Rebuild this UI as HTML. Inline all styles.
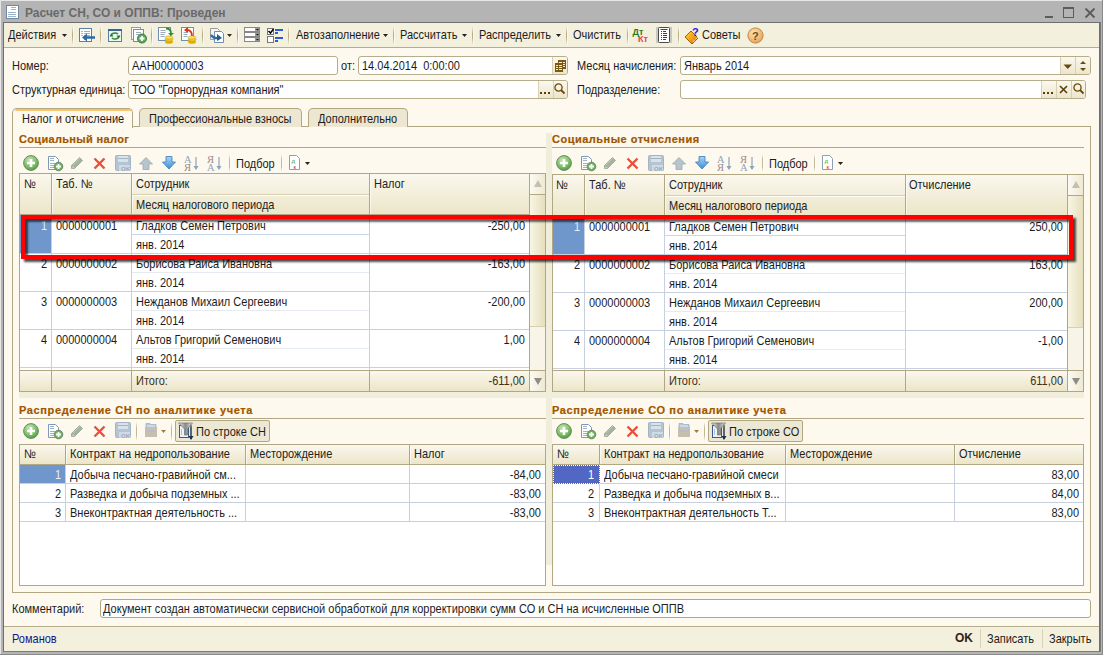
<!DOCTYPE html>
<html><head><meta charset="utf-8">
<style>
*{box-sizing:border-box;margin:0;padding:0}
html,body{width:1103px;height:655px;overflow:hidden;background:#b4b4b4}
body{font-family:"Liberation Sans",sans-serif;font-size:11px;color:#000;position:relative}
.a{position:absolute;white-space:nowrap}
.t{position:absolute;white-space:nowrap;line-height:13px}
.inp{position:absolute;background:#fff;border:1px solid #b6ad8b;border-radius:3px}
.btn{position:absolute;top:0;height:17px;border-left:1px solid #d8d0b0;background:linear-gradient(#fbf8ee,#ece6cc)}
.sep{position:absolute;width:1px;background:#d9d2b4}
.tbs{top:26px;height:19px;background:linear-gradient(#f4f0de,#b9ad86 40%,#b9ad86 60%,#f4f0de);box-shadow:1px 0 0 rgba(255,255,250,.5)}
.t{color:#1c1c1c;transform:scaleY(1.12);transform-origin:0 2px}
.hdr{position:absolute;color:#a05600;-webkit-text-stroke:0.2px #a05600;font-weight:bold;font-size:11px;white-space:nowrap;line-height:13px}
.hl{position:absolute;height:1px;background:#b6ad8b}
.vl{position:absolute;width:1px;background:#b6ad8b}
.gl{position:absolute;height:1px;background:#c9d3e0}
.gv{position:absolute;width:1px;background:#c9d3e0}
</style></head><body>
<!-- window frame -->
<div class="a" style="left:0;top:0;width:1103px;height:1px;background:#e6e6e6"></div>
<div class="a" style="left:0;top:0;width:1px;height:655px;background:#e6e6e6"></div>
<div class="a" style="left:1102px;top:0;width:1px;height:655px;background:#8a8a8a"></div>
<div class="a" style="left:0;top:654px;width:1103px;height:1px;background:#8a8a8a"></div>
<!-- inner dark border -->
<div class="a" style="left:3px;top:22px;width:1097px;height:629px;border:1px solid #6e6e6e;background:#fdf9ee"></div>
<div class="a" style="left:1100px;top:22px;width:1px;height:630px;background:#7a7a7a"></div>
<div class="a" style="left:3px;top:651px;width:1098px;height:1px;background:#7a7a7a"></div>
<!-- title -->
<div class="a" style="left:6px;top:5px;width:13px;height:14px;background:#fff;border:1px solid #6d89a6"></div>
<div class="a" style="left:11px;top:7px;width:5px;height:1px;background:#9fb4c8"></div>
<div class="a" style="left:11px;top:9px;width:5px;height:1px;background:#9fb4c8"></div>
<div class="a" style="left:8px;top:12px;width:8px;height:1px;background:#9fb4c8"></div>
<div class="a" style="left:8px;top:14px;width:8px;height:1px;background:#9fb4c8"></div>
<div class="a" style="left:8px;top:16px;width:8px;height:1px;background:#9fb4c8"></div>
<div class="t" style="transform:none;left:25px;top:7px;font-weight:bold;color:#6a6a6a;font-size:12px">Расчет СН, СО и ОППВ: Проведен</div>
<div class="a" style="left:1045px;top:16px;width:8px;height:2px;background:#5c5c5c"></div>
<div class="a" style="left:1063px;top:7px;width:11px;height:11px;border:1px solid #5c5c5c;border-top-width:2px"></div>
<svg class="a" style="left:1084px;top:7px" width="12" height="12"><path d="M1.5 1.5L10.5 10.5M10.5 1.5L1.5 10.5" stroke="#5c5c5c" stroke-width="1.8"/></svg>

<!-- toolbar -->
<div class="a" style="left:4px;top:23px;width:1095px;height:24px;background:#f4f0de"></div>
<div class="a" style="left:4px;top:47px;width:1095px;height:1px;background:#b6ad8b"></div>
<div class="t" style="left:8px;top:28px">Действия</div>
<svg class="a" style="left:62px;top:34px" width="6" height="4"><path d="M0 0H5L2.5 3Z" fill="#222"/></svg>
<div class="sep tbs" style="left:72px"></div>
<!-- icon1 list+arrow -->
<svg class="a" style="left:78px;top:27px" width="18" height="16">
<rect x="1.5" y="1.5" width="12" height="13" fill="#fff" stroke="#5a7fa8"/>
<path d="M6 4.5h6M6 6.5h6M6 8.5h6M6 10.5h3M6 12.5h3" stroke="#9ab0c8"/><path d="M3.5 4.5h1M3.5 6.5h1M3.5 8.5h1" stroke="#3a70b0"/>
<path d="M17 10.5H8.5" stroke="#2d6aa8" stroke-width="2.5"/><path d="M4 10.5L9 6.5V14.5Z" fill="#2d6aa8"/>
</svg>
<div class="sep tbs" style="left:100px"></div>
<!-- icon2 window refresh -->
<svg class="a" style="left:107px;top:28px" width="16" height="15">
<rect x="1.5" y="1.5" width="13" height="12" fill="#eef3f8" stroke="#5a7fa8"/>
<rect x="1" y="1" width="14" height="2" fill="#3a6494"/>
<path d="M4 8a4 3 0 0 1 7-2" stroke="#2e8b2e" stroke-width="1.6" fill="none"/><path d="M2.5 8.5h4L4.5 6z" fill="#1e7a1e"/>
<path d="M12 8a4 3 0 0 1 -7 2" stroke="#2e8b2e" stroke-width="1.6" fill="none"/><path d="M13.5 7.5h-4L11.5 10z" fill="#1e7a1e"/>
</svg>
<!-- icon3 copy plus -->
<svg class="a" style="left:130px;top:26px" width="18" height="18">
<rect x="1.5" y="1.5" width="9" height="12" fill="#fff" stroke="#8aa0b8"/>
<rect x="3.5" y="3.5" width="10" height="12" fill="#fff" stroke="#6f8fb0"/>
<path d="M6 6.5h5M6 8.5h3" stroke="#9ab"/>
<circle cx="12" cy="12.5" r="4.5" fill="#5aa85a" stroke="#3d7d3d"/>
<path d="M12 10v5M9.5 12.5h5" stroke="#fff" stroke-width="1.8"/>
</svg>
<div class="sep tbs" style="left:151px"></div>
<!-- icon4 doc green arrow coins -->
<svg class="a" style="left:157px;top:26px" width="18" height="18">
<rect x="1.5" y="1.5" width="12" height="13" fill="#fff" stroke="#6f8fb0"/>
<path d="M3.5 4.5h5M3.5 6.5h5M3.5 8.5h4M3.5 10.5h4" stroke="#9ab"/>
<path d="M9 2.5q5 0 5 5" stroke="#2f8f2f" stroke-width="1.8" fill="none"/><path d="M11 7h6l-3 3z" fill="#2f8f2f"/>
<ellipse cx="12" cy="16" rx="4" ry="1.8" fill="#e0b000"/><ellipse cx="12" cy="13.5" rx="4" ry="1.8" fill="#f2cc30" stroke="#c79a00" stroke-width=".6"/><ellipse cx="12" cy="11.5" rx="4" ry="1.6" fill="#ffe070" stroke="#c79a00" stroke-width=".6"/>
</svg>
<!-- icon5 doc red arrow coins -->
<svg class="a" style="left:180px;top:26px" width="18" height="18">
<rect x="1.5" y="1.5" width="12" height="13" fill="#fff" stroke="#6f8fb0"/>
<path d="M3.5 6.5h4M3.5 8.5h4M3.5 10.5h4" stroke="#9ab"/>
<path d="M12 10q0-6-5-6" stroke="#e03010" stroke-width="1.8" fill="none"/><path d="M4 4l4-3v6z" fill="#e03010"/>
<ellipse cx="12" cy="16" rx="4" ry="1.8" fill="#e0b000"/><ellipse cx="12" cy="13.5" rx="4" ry="1.8" fill="#f2cc30" stroke="#c79a00" stroke-width=".6"/><ellipse cx="12" cy="11.5" rx="4" ry="1.6" fill="#ffe070" stroke="#c79a00" stroke-width=".6"/>
</svg>
<div class="sep tbs" style="left:202px"></div>
<!-- icon6 two docs blue arrow -->
<svg class="a" style="left:209px;top:27px" width="16" height="16">
<path d="M1.5 1.5h7l2 2v9h-9z" fill="#f4f4f4" stroke="#9a9a9a"/>
<path d="M5.5 4.5h7l2 2v9h-9z" fill="#fff" stroke="#6f8fb0"/>
<path d="M2 8q3 4 7 3" stroke="#2d6aa8" stroke-width="2.2" fill="none"/><path d="M8 7l5 4-5 3z" fill="#1f5a90"/>
</svg>
<svg class="a" style="left:227px;top:34px" width="6" height="4"><path d="M0 0H5L2.5 3Z" fill="#3a2a10"/></svg>
<div class="sep tbs" style="left:237px"></div>
<!-- icon7 three fields -->
<svg class="a" style="left:244px;top:27px" width="17" height="16">
<g fill="#fff" stroke="#888"><rect x=".5" y=".5" width="15" height="4"/><rect x=".5" y="5.5" width="15" height="4"/><rect x=".5" y="10.5" width="15" height="4"/></g>
<g fill="#999"><rect x="11" y="1" width="4" height="3"/><rect x="11" y="6" width="4" height="3"/><rect x="11" y="11" width="4" height="3"/></g>
<g fill="#111"><path d="M12 2h3l-1.5 1.5z"/><path d="M12 7h3l-1.5 1.5z"/><path d="M12 12h3l-1.5 1.5z"/></g>
</svg>
<!-- icon8 checklist -->
<svg class="a" style="left:266px;top:27px" width="18" height="16">
<rect x="1.5" y="1.5" width="6" height="6" fill="#fff" stroke="#777"/>
<path d="M2.5 4l2 2 3-4" stroke="#000" stroke-width="1.5" fill="none"/>
<rect x="1.5" y="9.5" width="6" height="6" fill="#fff" stroke="#777"/>
<rect x="9" y="2" width="8" height="2" fill="#2a5ad8"/><rect x="9" y="5" width="3" height="2" fill="#2a5ad8"/>
<rect x="9" y="10" width="8" height="2" fill="#2a5ad8"/><rect x="9" y="13" width="3" height="2" fill="#2a5ad8"/>
</svg>
<div class="sep tbs" style="left:288px"></div>
<div class="t" style="left:296px;top:28px">Автозаполнение</div>
<svg class="a" style="left:383px;top:34px" width="6" height="4"><path d="M0 0H5L2.5 3Z" fill="#222"/></svg>
<div class="sep tbs" style="left:393px"></div>
<div class="t" style="left:400px;top:28px">Рассчитать</div>
<svg class="a" style="left:462px;top:34px" width="6" height="4"><path d="M0 0H5L2.5 3Z" fill="#222"/></svg>
<div class="sep tbs" style="left:472px"></div>
<div class="t" style="left:479px;top:28px">Распределить</div>
<svg class="a" style="left:556px;top:34px" width="6" height="4"><path d="M0 0H5L2.5 3Z" fill="#222"/></svg>
<div class="sep tbs" style="left:566px"></div>
<div class="t" style="left:573px;top:28px">Очистить</div>
<div class="sep tbs" style="left:627px"></div>
<!-- Dt Kt -->
<svg class="a" style="left:632px;top:26px" width="18" height="18">
<text x="0.5" y="8.5" font-family="Liberation Sans" font-weight="bold" font-size="9" fill="#1e7a1e">Дт</text>
<text x="6" y="16" font-family="Liberation Sans" font-weight="bold" font-size="9" fill="#f04040">Кт</text>
</svg>
<!-- list doc -->
<svg class="a" style="left:656px;top:27px" width="16" height="16">
<rect x="0" y="0" width="16" height="16" fill="#c9c9c2"/>
<rect x="2.5" y=".5" width="11" height="15" rx="1" fill="#fff" stroke="#4a4a4a"/>
<path d="M4.5 2.5h7" stroke="#1a4a7a" stroke-width="1"/>
<g fill="#1a4a7a"><rect x="5" y="4" width="1" height="1"/><rect x="5" y="6" width="1" height="1"/><rect x="5" y="8" width="1" height="1"/><rect x="5" y="10" width="1" height="1"/><rect x="5" y="12" width="1" height="1"/>
<rect x="7" y="4" width="3" height="1"/><rect x="7" y="6" width="4" height="1"/><rect x="7" y="8" width="4" height="1"/><rect x="7" y="10" width="4" height="1"/><rect x="7" y="12" width="3" height="1"/></g>
</svg>
<div class="sep tbs" style="left:678px"></div>
<!-- sovety -->
<svg class="a" style="left:684px;top:26px" width="18" height="18">
<defs><linearGradient id="bk" x1="0" y1="0" x2="1" y2="1"><stop offset="0" stop-color="#ffe020"/><stop offset="1" stop-color="#e86a10"/></linearGradient></defs>
<path d="M1 11l6-6 7 7-6 6z" fill="url(#bk)" stroke="#8a4000" stroke-width=".8"/>
<path d="M9 16l5-5" stroke="#fff" stroke-width="1" stroke-dasharray="1 1"/>
<text x="8" y="10" font-family="Liberation Sans" font-weight="bold" font-size="11" fill="#1a1ae0">?</text>
</svg>
<div class="t" style="left:702px;top:28px">Советы</div>
<svg class="a" style="left:747px;top:27px" width="17" height="17">
<defs><radialGradient id="hg" cx=".4" cy=".35" r=".7"><stop offset="0" stop-color="#ffe6b8"/><stop offset="1" stop-color="#e8a04a"/></radialGradient></defs>
<circle cx="8.5" cy="8.5" r="7.6" fill="url(#hg)" stroke="#b98a50"/>
<text x="5" y="13" font-family="Liberation Sans" font-weight="bold" font-size="11" fill="#6a4a20">?</text>
</svg>


<!-- form body -->
<!-- header fields -->
<div class="t" style="left:12px;top:59px">Номер:</div>
<div class="inp" style="left:128px;top:56px;width:210px;height:19px"></div>
<div class="t" style="left:132px;top:59px">ААН00000003</div>
<div class="t" style="left:341px;top:59px">от:</div>
<div class="inp" style="left:358px;top:56px;width:210px;height:19px;overflow:hidden"><div class="btn" style="left:193px;width:16px"></div></div>
<div class="t" style="left:362px;top:59px">14.04.2014&nbsp; 0:00:00</div>
<svg class="a" style="left:555px;top:60px" width="11" height="12"><g fill="#7a5a10"><rect x="3" y="0" width="8" height="9"/><rect x="0" y="3" width="8" height="9"/></g><g fill="#f4efdc"><rect x="1" y="5" width="2" height="1"/><rect x="4" y="5" width="3" height="1"/><rect x="1" y="7" width="2" height="1"/><rect x="4" y="7" width="3" height="1"/><rect x="1" y="9" width="2" height="1"/><rect x="4" y="9" width="3" height="1"/><rect x="1" y="10" width="6" height="1" fill="#7a5a10"/><rect x="8" y="2" width="2" height="1"/><rect x="8" y="4" width="2" height="1"/><rect x="8" y="6" width="2" height="1"/><rect x="4" y="2" width="3" height="1"/></g></svg>
<div class="t" style="left:577px;top:59px">Месяц начисления:</div>
<div class="inp" style="left:680px;top:56px;width:411px;height:19px;overflow:hidden"><div class="btn" style="left:379px;width:15px"></div><div class="btn" style="left:394px;width:16px"></div></div>
<div class="t" style="left:684px;top:59px">Январь 2014</div>
<svg class="a" style="left:1063px;top:64px" width="10" height="6"><path d="M0.5 0.5H9L4.75 5Z" fill="#6a4a08"/></svg>
<svg class="a" style="left:1079px;top:59.5px" width="9" height="12"><path d="M1 4H7L4 1Z M1 8H7L4 11Z" fill="#6a4a08"/></svg>

<div class="t" style="left:12px;top:83px">Структурная единица:</div>
<div class="inp" style="left:128px;top:80px;width:440px;height:19px;overflow:hidden"><div class="btn" style="left:409px;width:15px"></div><div class="btn" style="left:424px;width:15px"></div></div>
<div class="t" style="left:132px;top:83px">ТОО "Горнорудная компания"</div>
<svg class="a" style="left:540px;top:92px" width="11" height="3"><g fill="#5a4008"><rect x="0" y="0" width="2" height="2"/><rect x="4" y="0" width="2" height="2"/><rect x="8" y="0" width="2" height="2"/></g></svg>
<svg class="a" style="left:554px;top:83px" width="12" height="12"><circle cx="4.5" cy="4.5" r="3.6" fill="none" stroke="#6a4a08" stroke-width="1.3"/><path d="M7 7l3.5 3.5" stroke="#6a4a08" stroke-width="1.8"/></svg>
<div class="t" style="left:577px;top:83px">Подразделение:</div>
<div class="inp" style="left:680px;top:80px;width:406px;height:19px;overflow:hidden"><div class="btn" style="left:360px;width:15px"></div><div class="btn" style="left:375px;width:15px"></div><div class="btn" style="left:390px;width:15px"></div></div>
<svg class="a" style="left:1043px;top:92px" width="11" height="3"><g fill="#5a4008"><rect x="0" y="0" width="2" height="2"/><rect x="4" y="0" width="2" height="2"/><rect x="8" y="0" width="2" height="2"/></g></svg>
<svg class="a" style="left:1059px;top:85px" width="9" height="9"><path d="M1 1l7 7M8 1l-7 7" stroke="#5a4008" stroke-width="1.6"/></svg>
<svg class="a" style="left:1073px;top:83px" width="12" height="12"><circle cx="4.5" cy="4.5" r="3.6" fill="none" stroke="#6a4a08" stroke-width="1.3"/><path d="M7 7l3.5 3.5" stroke="#6a4a08" stroke-width="1.8"/></svg>
<!--BODY--><div class="a" style="left:12px;top:126px;width:1079px;height:467px;border:1px solid #b1a783;background:#fdf9ee"></div>
<div class="a" style="left:139px;top:108px;width:163px;height:19px;border:1px solid #b1a783;border-bottom:none;border-radius:5px 5px 0 0;background:#ede7d1"></div>
<div class="t" style="left:149px;top:112px;">Профессиональные взносы</div>
<div class="a" style="left:308px;top:108px;width:100px;height:19px;border:1px solid #b1a783;border-bottom:none;border-radius:5px 5px 0 0;background:#ede7d1"></div>
<div class="t" style="left:318px;top:112px;">Дополнительно</div>
<div class="a" style="left:12px;top:108px;width:121px;height:20px;border:1px solid #b1a783;border-bottom:none;border-radius:5px 5px 0 0;background:#fdf9ee"></div>
<div class="a" style="left:15px;top:109px;width:116px;height:2px;background:#f5c66e;border-radius:3px 3px 0 0"></div>
<div class="t" style="left:22px;top:112px;">Налог и отчисление</div>
<div class="a" style="left:546px;top:133px;width:6px;height:432px;background:#f1eddb"></div>
<div class="a" style="left:546px;top:398px;width:6px;height:0px;"></div>
<div class="a" style="left:19px;top:392px;width:1065px;height:6px;background:#f2eedc"></div>
<div class="hdr" style="left:19px;top:133px;letter-spacing:0.33px">Социальный налог</div>
<div class="a" style="left:19px;top:147px;width:527px;height:1px;background:#b1a783"></div>
<div class="hdr" style="left:552px;top:133px;letter-spacing:0.5px">Социальные отчисления</div>
<div class="a" style="left:552px;top:147px;width:532px;height:1px;background:#b1a783"></div>
<div class="hdr" style="left:19px;top:404px;letter-spacing:0.62px">Распределение СН по аналитике учета</div>
<div class="a" style="left:19px;top:418px;width:527px;height:1px;background:#b1a783"></div>
<div class="hdr" style="left:552px;top:404px;letter-spacing:0.62px">Распределение СО по аналитике учета</div>
<div class="a" style="left:552px;top:418px;width:532px;height:1px;background:#b1a783"></div>
<div class="a" style="left:19px;top:173px;width:527px;height:219px;border:1px solid #b1a783;background:#fff"></div>
<div class="a" style="left:20px;top:174px;width:509px;height:40px;background:linear-gradient(#faf8ee,#ece5c8)"></div>
<div class="a" style="left:20px;top:214px;width:509px;height:1px;background:#b1a783"></div>
<div class="a" style="left:51px;top:174px;width:1px;height:40px;background:#b1a783"></div>
<div class="a" style="left:52px;top:174px;width:1px;height:40px;background:rgba(255,255,255,.6)"></div>
<div class="a" style="left:131px;top:174px;width:1px;height:40px;background:#b1a783"></div>
<div class="a" style="left:132px;top:174px;width:1px;height:40px;background:rgba(255,255,255,.6)"></div>
<div class="a" style="left:369px;top:174px;width:1px;height:40px;background:#b1a783"></div>
<div class="a" style="left:370px;top:174px;width:1px;height:40px;background:rgba(255,255,255,.6)"></div>
<div class="a" style="left:132px;top:194px;width:237px;height:1px;background:#d6cfb1"></div>
<div class="a" style="left:132px;top:195px;width:237px;height:1px;background:#fffdf6"></div>
<div class="a" style="left:51px;top:215px;width:1px;height:155px;background:#c7d0dc"></div>
<div class="a" style="left:131px;top:215px;width:1px;height:155px;background:#c7d0dc"></div>
<div class="a" style="left:369px;top:215px;width:1px;height:155px;background:#c7d0dc"></div>
<div class="a" style="left:20px;top:253px;width:509px;height:1px;background:#c7d0dc"></div>
<div class="a" style="left:132px;top:234px;width:237px;height:1px;background:#c9d7ea"></div>
<div class="a" style="left:20px;top:291px;width:509px;height:1px;background:#c7d0dc"></div>
<div class="a" style="left:132px;top:272px;width:237px;height:1px;background:#e6ebf1"></div>
<div class="a" style="left:20px;top:329px;width:509px;height:1px;background:#c7d0dc"></div>
<div class="a" style="left:132px;top:310px;width:237px;height:1px;background:#e6ebf1"></div>
<div class="a" style="left:20px;top:367px;width:509px;height:1px;background:#c7d0dc"></div>
<div class="a" style="left:132px;top:348px;width:237px;height:1px;background:#e6ebf1"></div>
<div class="a" style="left:20px;top:215px;width:31px;height:38px;background:#7097cc"></div>
<div class="a" style="left:20px;top:370px;width:509px;height:1px;background:#b1a783"></div>
<div class="a" style="left:20px;top:371px;width:509px;height:20px;background:linear-gradient(#faf8ee,#ece5c8)"></div>
<div class="a" style="left:51px;top:371px;width:1px;height:20px;background:#b1a783"></div>
<div class="a" style="left:131px;top:371px;width:1px;height:20px;background:#b1a783"></div>
<div class="a" style="left:369px;top:371px;width:1px;height:20px;background:#b1a783"></div>
<div class="a" style="left:529px;top:174px;width:1px;height:217px;background:#b1a783"></div>
<div class="a" style="left:530px;top:174px;width:15px;height:217px;background:#f8f5e8"></div>
<div class="a" style="left:530px;top:174px;width:15px;height:20px;background:linear-gradient(90deg,#fbfaf3,#efe9d2)"></div>
<div class="a" style="left:530px;top:194px;width:15px;height:1px;background:#b1a783"></div>
<svg class="a" style="left:534px;top:180px" width="8" height="7"><path d="M0 7H8L4 0Z" fill="#c3c0b0"/></svg>
<div class="a" style="left:530px;top:195px;width:15px;height:131px;background:linear-gradient(90deg,#f8f5e4,#e6dfbd)"></div>
<div class="a" style="left:530px;top:326px;width:15px;height:1px;background:#d8d0b0"></div>
<div class="a" style="left:530px;top:370px;width:15px;height:1px;background:#b1a783"></div>
<div class="a" style="left:530px;top:371px;width:15px;height:20px;background:linear-gradient(90deg,#fbfaf3,#efe9d2)"></div>
<svg class="a" style="left:534px;top:378px" width="8" height="7"><path d="M0 0H8L4 7Z" fill="#8e8c84"/></svg>
<div class="t" style="left:24px;top:177px;color:#222;">№</div>
<div class="t" style="left:56px;top:177px;color:#222;">Таб. №</div>
<div class="t" style="left:136px;top:177px;color:#222;">Сотрудник</div>
<div class="t" style="left:136px;top:198px;color:#222;">Месяц налогового периода</div>
<div class="t" style="left:374px;top:177px;color:#222;">Налог</div>
<div class="t" style="right:1056px;top:219px;color:#e8eef8">1</div>
<div class="t" style="left:56px;top:219px;">0000000001</div>
<div class="t" style="left:136px;top:219px;">Гладков Семен Петрович</div>
<div class="t" style="left:136px;top:238px;">янв. 2014</div>
<div class="t" style="right:578px;top:219px;">-250,00</div>
<div class="t" style="right:1056px;top:257px;">2</div>
<div class="t" style="left:56px;top:257px;">0000000002</div>
<div class="t" style="left:136px;top:257px;">Борисова Раиса Ивановна</div>
<div class="t" style="left:136px;top:276px;">янв. 2014</div>
<div class="t" style="right:578px;top:257px;">-163,00</div>
<div class="t" style="right:1056px;top:295px;">3</div>
<div class="t" style="left:56px;top:295px;">0000000003</div>
<div class="t" style="left:136px;top:295px;">Нежданов Михаил Сергеевич</div>
<div class="t" style="left:136px;top:314px;">янв. 2014</div>
<div class="t" style="right:578px;top:295px;">-200,00</div>
<div class="t" style="right:1056px;top:333px;">4</div>
<div class="t" style="left:56px;top:333px;">0000000004</div>
<div class="t" style="left:136px;top:333px;">Альтов Григорий Семенович</div>
<div class="t" style="left:136px;top:352px;">янв. 2014</div>
<div class="t" style="right:578px;top:333px;">1,00</div>
<div class="t" style="left:136px;top:374px;color:#3c3020">Итого:</div>
<div class="t" style="right:578px;top:374px;color:#3c3020">-611,00</div>
<div class="a" style="left:552px;top:174px;width:532px;height:218px;border:1px solid #b1a783;background:#fff"></div>
<div class="a" style="left:553px;top:175px;width:514px;height:40px;background:linear-gradient(#faf8ee,#ece5c8)"></div>
<div class="a" style="left:553px;top:215px;width:514px;height:1px;background:#b1a783"></div>
<div class="a" style="left:584px;top:175px;width:1px;height:40px;background:#b1a783"></div>
<div class="a" style="left:585px;top:175px;width:1px;height:40px;background:rgba(255,255,255,.6)"></div>
<div class="a" style="left:664px;top:175px;width:1px;height:40px;background:#b1a783"></div>
<div class="a" style="left:665px;top:175px;width:1px;height:40px;background:rgba(255,255,255,.6)"></div>
<div class="a" style="left:905px;top:175px;width:1px;height:40px;background:#b1a783"></div>
<div class="a" style="left:906px;top:175px;width:1px;height:40px;background:rgba(255,255,255,.6)"></div>
<div class="a" style="left:665px;top:195px;width:240px;height:1px;background:#d6cfb1"></div>
<div class="a" style="left:665px;top:196px;width:240px;height:1px;background:#fffdf6"></div>
<div class="a" style="left:584px;top:216px;width:1px;height:154px;background:#c7d0dc"></div>
<div class="a" style="left:664px;top:216px;width:1px;height:154px;background:#c7d0dc"></div>
<div class="a" style="left:905px;top:216px;width:1px;height:154px;background:#c7d0dc"></div>
<div class="a" style="left:553px;top:254px;width:514px;height:1px;background:#c7d0dc"></div>
<div class="a" style="left:665px;top:235px;width:240px;height:1px;background:#c9d7ea"></div>
<div class="a" style="left:553px;top:292px;width:514px;height:1px;background:#c7d0dc"></div>
<div class="a" style="left:665px;top:273px;width:240px;height:1px;background:#e6ebf1"></div>
<div class="a" style="left:553px;top:330px;width:514px;height:1px;background:#c7d0dc"></div>
<div class="a" style="left:665px;top:311px;width:240px;height:1px;background:#e6ebf1"></div>
<div class="a" style="left:553px;top:368px;width:514px;height:1px;background:#c7d0dc"></div>
<div class="a" style="left:665px;top:349px;width:240px;height:1px;background:#e6ebf1"></div>
<div class="a" style="left:553px;top:216px;width:31px;height:38px;background:#7097cc"></div>
<div class="a" style="left:553px;top:370px;width:514px;height:1px;background:#b1a783"></div>
<div class="a" style="left:553px;top:371px;width:514px;height:20px;background:linear-gradient(#faf8ee,#ece5c8)"></div>
<div class="a" style="left:584px;top:371px;width:1px;height:20px;background:#b1a783"></div>
<div class="a" style="left:664px;top:371px;width:1px;height:20px;background:#b1a783"></div>
<div class="a" style="left:905px;top:371px;width:1px;height:20px;background:#b1a783"></div>
<div class="a" style="left:1067px;top:175px;width:1px;height:216px;background:#b1a783"></div>
<div class="a" style="left:1068px;top:175px;width:15px;height:216px;background:#f8f5e8"></div>
<div class="a" style="left:1068px;top:175px;width:15px;height:20px;background:linear-gradient(90deg,#fbfaf3,#efe9d2)"></div>
<div class="a" style="left:1068px;top:195px;width:15px;height:1px;background:#b1a783"></div>
<svg class="a" style="left:1072px;top:181px" width="8" height="7"><path d="M0 7H8L4 0Z" fill="#c3c0b0"/></svg>
<div class="a" style="left:1068px;top:196px;width:15px;height:131px;background:linear-gradient(90deg,#f8f5e4,#e6dfbd)"></div>
<div class="a" style="left:1068px;top:327px;width:15px;height:1px;background:#d8d0b0"></div>
<div class="a" style="left:1068px;top:370px;width:15px;height:1px;background:#b1a783"></div>
<div class="a" style="left:1068px;top:371px;width:15px;height:20px;background:linear-gradient(90deg,#fbfaf3,#efe9d2)"></div>
<svg class="a" style="left:1072px;top:378px" width="8" height="7"><path d="M0 0H8L4 7Z" fill="#8e8c84"/></svg>
<div class="t" style="left:556px;top:178px;color:#222;">№</div>
<div class="t" style="left:589px;top:178px;color:#222;">Таб. №</div>
<div class="t" style="left:669px;top:178px;color:#222;">Сотрудник</div>
<div class="t" style="left:669px;top:199px;color:#222;">Месяц налогового периода</div>
<div class="t" style="left:909px;top:178px;color:#222;">Отчисление</div>
<div class="t" style="right:523px;top:220px;color:#e8eef8">1</div>
<div class="t" style="left:589px;top:220px;">0000000001</div>
<div class="t" style="left:669px;top:220px;">Гладков Семен Петрович</div>
<div class="t" style="left:669px;top:239px;">янв. 2014</div>
<div class="t" style="right:40px;top:220px;">250,00</div>
<div class="t" style="right:523px;top:258px;">2</div>
<div class="t" style="left:589px;top:258px;">0000000002</div>
<div class="t" style="left:669px;top:258px;">Борисова Раиса Ивановна</div>
<div class="t" style="left:669px;top:277px;">янв. 2014</div>
<div class="t" style="right:40px;top:258px;">163,00</div>
<div class="t" style="right:523px;top:296px;">3</div>
<div class="t" style="left:589px;top:296px;">0000000003</div>
<div class="t" style="left:669px;top:296px;">Нежданов Михаил Сергеевич</div>
<div class="t" style="left:669px;top:315px;">янв. 2014</div>
<div class="t" style="right:40px;top:296px;">200,00</div>
<div class="t" style="right:523px;top:334px;">4</div>
<div class="t" style="left:589px;top:334px;">0000000004</div>
<div class="t" style="left:669px;top:334px;">Альтов Григорий Семенович</div>
<div class="t" style="left:669px;top:353px;">янв. 2014</div>
<div class="t" style="right:40px;top:334px;">-1,00</div>
<div class="t" style="left:669px;top:374px;color:#3c3020">Итого:</div>
<div class="t" style="right:40px;top:374px;color:#3c3020">611,00</div>
<div class="a" style="left:19px;top:444px;width:527px;height:142px;border:1px solid #b1a783;background:#fff"></div>
<div class="a" style="left:20px;top:445px;width:525px;height:19px;background:linear-gradient(#faf8ee,#ece5c8)"></div>
<div class="a" style="left:20px;top:464px;width:525px;height:1px;background:#b1a783"></div>
<div class="a" style="left:65px;top:445px;width:1px;height:19px;background:#b1a783"></div>
<div class="a" style="left:66px;top:445px;width:1px;height:19px;background:rgba(255,255,255,.6)"></div>
<div class="a" style="left:245px;top:445px;width:1px;height:19px;background:#b1a783"></div>
<div class="a" style="left:246px;top:445px;width:1px;height:19px;background:rgba(255,255,255,.6)"></div>
<div class="a" style="left:409px;top:445px;width:1px;height:19px;background:#b1a783"></div>
<div class="a" style="left:410px;top:445px;width:1px;height:19px;background:rgba(255,255,255,.6)"></div>
<div class="a" style="left:65px;top:465px;width:1px;height:57px;background:#c7d0dc"></div>
<div class="a" style="left:245px;top:465px;width:1px;height:57px;background:#c7d0dc"></div>
<div class="a" style="left:409px;top:465px;width:1px;height:57px;background:#c7d0dc"></div>
<div class="a" style="left:20px;top:483px;width:525px;height:1px;background:#c7d0dc"></div>
<div class="a" style="left:20px;top:502px;width:525px;height:1px;background:#c7d0dc"></div>
<div class="a" style="left:20px;top:521px;width:525px;height:1px;background:#c7d0dc"></div>
<div class="a" style="left:20px;top:465px;width:45px;height:18px;background:#7097cc"></div>
<div class="t" style="left:24px;top:447px;color:#222;">№</div>
<div class="t" style="left:70px;top:447px;color:#222;">Контракт на недропользование</div>
<div class="t" style="left:250px;top:447px;color:#222;">Месторождение</div>
<div class="t" style="left:414px;top:447px;color:#222;">Налог</div>
<div class="t" style="right:1042px;top:468px;color:#e8eef8">1</div>
<div class="t" style="left:70px;top:468px;">Добыча песчано-гравийной см...</div>
<div class="t" style="right:562px;top:468px;">-84,00</div>
<div class="t" style="right:1042px;top:487px;">2</div>
<div class="t" style="left:70px;top:487px;">Разведка и добыча подземных ...</div>
<div class="t" style="right:562px;top:487px;">-83,00</div>
<div class="t" style="right:1042px;top:506px;">3</div>
<div class="t" style="left:70px;top:506px;">Внеконтрактная деятельность ...</div>
<div class="t" style="right:562px;top:506px;">-83,00</div>
<div class="a" style="left:552px;top:444px;width:532px;height:142px;border:1px solid #b1a783;background:#fff"></div>
<div class="a" style="left:553px;top:445px;width:530px;height:19px;background:linear-gradient(#faf8ee,#ece5c8)"></div>
<div class="a" style="left:553px;top:464px;width:530px;height:1px;background:#b1a783"></div>
<div class="a" style="left:599px;top:445px;width:1px;height:19px;background:#b1a783"></div>
<div class="a" style="left:600px;top:445px;width:1px;height:19px;background:rgba(255,255,255,.6)"></div>
<div class="a" style="left:785px;top:445px;width:1px;height:19px;background:#b1a783"></div>
<div class="a" style="left:786px;top:445px;width:1px;height:19px;background:rgba(255,255,255,.6)"></div>
<div class="a" style="left:954px;top:445px;width:1px;height:19px;background:#b1a783"></div>
<div class="a" style="left:955px;top:445px;width:1px;height:19px;background:rgba(255,255,255,.6)"></div>
<div class="a" style="left:599px;top:465px;width:1px;height:57px;background:#c7d0dc"></div>
<div class="a" style="left:785px;top:465px;width:1px;height:57px;background:#c7d0dc"></div>
<div class="a" style="left:954px;top:465px;width:1px;height:57px;background:#c7d0dc"></div>
<div class="a" style="left:553px;top:483px;width:530px;height:1px;background:#c7d0dc"></div>
<div class="a" style="left:553px;top:502px;width:530px;height:1px;background:#c7d0dc"></div>
<div class="a" style="left:553px;top:521px;width:530px;height:1px;background:#c7d0dc"></div>
<div class="a" style="left:553px;top:465px;width:47px;height:19px;background:#5266c4;border:1px dotted #fff"></div>
<div class="t" style="left:557px;top:447px;color:#222;">№</div>
<div class="t" style="left:604px;top:447px;color:#222;">Контракт на недропользование</div>
<div class="t" style="left:790px;top:447px;color:#222;">Месторождение</div>
<div class="t" style="left:959px;top:447px;color:#222;">Отчисление</div>
<div class="t" style="right:509px;top:468px;color:#fff">1</div>
<div class="t" style="left:604px;top:468px;">Добыча песчано-гравийной смеси</div>
<div class="t" style="right:24px;top:468px;">83,00</div>
<div class="t" style="right:509px;top:487px;">2</div>
<div class="t" style="left:604px;top:487px;">Разведка и добыча подземных в...</div>
<div class="t" style="right:24px;top:487px;">84,00</div>
<div class="t" style="right:509px;top:506px;">3</div>
<div class="t" style="left:604px;top:506px;">Внеконтрактная деятельность Т...</div>
<div class="t" style="right:24px;top:506px;">83,00</div>
<svg class="a" style="left:23px;top:155px" width="17" height="17"><defs><radialGradient id="ga23155" cx=".4" cy=".3" r=".75"><stop offset="0" stop-color="#c6e6b4"/><stop offset=".6" stop-color="#7cc068"/><stop offset="1" stop-color="#4a9a3a"/></radialGradient></defs><circle cx="8" cy="8" r="7.4" fill="url(#ga23155)" stroke="#6d8a64" stroke-width="1"/><path d="M8 4v8M4 8h8" stroke="#fff" stroke-width="2.6"/></svg>
<svg class="a" style="left:47px;top:156px" width="17" height="16"><path d="M1.5 .5h7l3 3v10h-10z" fill="#fff" stroke="#7f98b8"/><path d="M3 2.5h4M3 4.5h4M3 7.5h5M3 9.5h4M3 11.5h4" stroke="#9fb2c6"/><circle cx="11.5" cy="10.5" r="4.3" fill="#6cb45a" stroke="#5a7a5a" stroke-width=".8"/><path d="M11.5 8v5M9 10.5h5" stroke="#fff" stroke-width="1.8"/></svg>
<svg class="a" style="left:70px;top:156px" width="14" height="14"><path d="M1.5 9.5L9.5 1.5l3 3-8 8h-3z" fill="#a4b49c" stroke="#8e9e88" stroke-width=".7"/><path d="M2 12.5l.8-2.6 1.8 1.8z" fill="#c8d2c0"/><path d="M3 9l7-7" stroke="#c0ccb8" stroke-width="1"/></svg>
<svg class="a" style="left:93px;top:157px" width="13" height="13"><path d="M1.5 1.5l10 10M11.5 1.5l-10 10" stroke="#e8503a" stroke-width="2.4"/></svg>
<svg class="a" style="left:115px;top:155px" width="16" height="16"><rect x=".5" y=".5" width="15" height="15" rx="1" fill="#b4c4d2" stroke="#a4b4c4"/><rect x="3" y="1" width="10" height="6" fill="#d8e2ea"/><rect x="3" y="3" width="10" height="1" fill="#a4b4c4"/><rect x="4" y="10" width="11" height="6" fill="#d0dae4"/><text x="6" y="15.5" font-family="Liberation Sans" font-size="6" font-weight="bold" fill="#9aaabb">OK</text></svg>
<svg class="a" style="left:139px;top:157px" width="14" height="13"><path d="M7 .5L13.5 7H10v5.5H4V7H.5z" fill="#b7c4cc" stroke="#9aaab4" stroke-width=".8"/></svg>
<svg class="a" style="left:162px;top:156px" width="14" height="14"><defs><linearGradient id="gd162" x1="0" x2="0" y1="0" y2="1"><stop offset="0" stop-color="#a9d4f4"/><stop offset="1" stop-color="#3e8ed6"/></linearGradient></defs><path d="M4 .5h6V6h3.5L7 13 .5 6H4z" fill="url(#gd162)" stroke="#3a7ab8" stroke-width=".8"/></svg>
<svg class="a" style="left:184px;top:155px" width="16" height="17"><text x="0" y="8" font-family="Liberation Serif" font-size="10.5" fill="#8ea4b8">А</text><text x="0" y="16" font-family="Liberation Serif" font-size="10.5" fill="#a08888">Я</text><path d="M12 2v12" stroke="#8ea4b8" stroke-width="1.2"/><path d="M9.5 11l2.5 4 2.5-4z" fill="#8ea4b8"/></svg>
<svg class="a" style="left:207px;top:155px" width="16" height="17"><text x="0" y="8" font-family="Liberation Serif" font-size="10.5" fill="#a08888">Я</text><text x="0" y="16" font-family="Liberation Serif" font-size="10.5" fill="#8ea4b8">А</text><path d="M12 2v12" stroke="#8ea4b8" stroke-width="1.2"/><path d="M9.5 11l2.5 4 2.5-4z" fill="#8ea4b8"/></svg>
<div class="a" style="left:229px;top:154px;width:1px;height:18px;background:linear-gradient(#fdf9ee,#c2b898 30%,#c2b898 70%,#fdf9ee);box-shadow:1px 0 0 rgba(255,255,255,.6)"></div>
<div class="t" style="left:236px;top:157px;">Подбор</div>
<div class="a" style="left:281px;top:154px;width:1px;height:18px;background:linear-gradient(#fdf9ee,#c2b898 30%,#c2b898 70%,#fdf9ee);box-shadow:1px 0 0 rgba(255,255,255,.6)"></div>
<svg class="a" style="left:289px;top:155px" width="12" height="16"><path d="M.5 .5h7l3 3v11H.5z" fill="#fff" stroke="#8aa0b8"/><text x="2.5" y="8" font-family="Liberation Sans" font-size="6" fill="#30a030">д</text><text x="4.5" y="13.5" font-family="Liberation Sans" font-size="6" fill="#e02020">к</text></svg>
<svg class="a" style="left:305px;top:162px" width="6" height="4"><path d="M0 0H5L2.5 3Z" fill="#2a2010"/></svg>
<svg class="a" style="left:23px;top:423px" width="17" height="17"><defs><radialGradient id="ga23423" cx=".4" cy=".3" r=".75"><stop offset="0" stop-color="#c6e6b4"/><stop offset=".6" stop-color="#7cc068"/><stop offset="1" stop-color="#4a9a3a"/></radialGradient></defs><circle cx="8" cy="8" r="7.4" fill="url(#ga23423)" stroke="#6d8a64" stroke-width="1"/><path d="M8 4v8M4 8h8" stroke="#fff" stroke-width="2.6"/></svg>
<svg class="a" style="left:47px;top:424px" width="17" height="16"><path d="M1.5 .5h7l3 3v10h-10z" fill="#fff" stroke="#7f98b8"/><path d="M3 2.5h4M3 4.5h4M3 7.5h5M3 9.5h4M3 11.5h4" stroke="#9fb2c6"/><circle cx="11.5" cy="10.5" r="4.3" fill="#6cb45a" stroke="#5a7a5a" stroke-width=".8"/><path d="M11.5 8v5M9 10.5h5" stroke="#fff" stroke-width="1.8"/></svg>
<svg class="a" style="left:70px;top:424px" width="14" height="14"><path d="M1.5 9.5L9.5 1.5l3 3-8 8h-3z" fill="#a4b49c" stroke="#8e9e88" stroke-width=".7"/><path d="M2 12.5l.8-2.6 1.8 1.8z" fill="#c8d2c0"/><path d="M3 9l7-7" stroke="#c0ccb8" stroke-width="1"/></svg>
<svg class="a" style="left:93px;top:425px" width="13" height="13"><path d="M1.5 1.5l10 10M11.5 1.5l-10 10" stroke="#e8503a" stroke-width="2.4"/></svg>
<svg class="a" style="left:115px;top:422px" width="16" height="16"><rect x=".5" y=".5" width="15" height="15" rx="1" fill="#b4c4d2" stroke="#a4b4c4"/><rect x="3" y="1" width="10" height="6" fill="#d8e2ea"/><rect x="3" y="3" width="10" height="1" fill="#a4b4c4"/><rect x="4" y="10" width="11" height="6" fill="#d0dae4"/><text x="6" y="15.5" font-family="Liberation Sans" font-size="6" font-weight="bold" fill="#9aaabb">OK</text></svg>
<div class="a" style="left:136px;top:422px;width:1px;height:19px;background:linear-gradient(#fdf9ee,#c2b898 30%,#c2b898 70%,#fdf9ee);box-shadow:1px 0 0 rgba(255,255,255,.6)"></div>
<svg class="a" style="left:145px;top:423px" width="13" height="15"><path d="M1 .5h4l1 1h5v8H1z" fill="#b4c6dc" stroke="#9fb2c8" stroke-width=".8"/><path d="M2 3h8M2 5h8M3 7h7" stroke="#e4ecf4" stroke-width="1"/><rect x="0" y="4" width="12" height="10" fill="#c4bcaa" opacity=".85"/><rect x="0" y="9" width="12" height="5" fill="#c6bfae"/><path d="M3 8h6" stroke="#a8b8e0"/></svg>
<svg class="a" style="left:161px;top:430px" width="6" height="4"><path d="M0 0H5L2.5 3Z" fill="#9a8040"/></svg>
<div class="a" style="left:171px;top:422px;width:1px;height:19px;background:linear-gradient(#fdf9ee,#c2b898 30%,#c2b898 70%,#fdf9ee);box-shadow:1px 0 0 rgba(255,255,255,.6)"></div>
<div class="a" style="left:175px;top:420px;width:95px;height:22px;border:1px solid #b1a783;background:#ede8d3;border-radius:2px"></div>
<svg class="a" style="left:178px;top:422px" width="17" height="19"><defs><linearGradient id="fg178" x1="0" x2="1"><stop offset="0" stop-color="#f0f0f0"/><stop offset=".5" stop-color="#8a8a8a"/><stop offset="1" stop-color="#e8e8e8"/></linearGradient></defs><rect x="1.5" y="3.5" width="9" height="12" fill="#eef2f8" stroke="#3a5a88"/><path d="M3 8h1M3 10h1M3 12h1" stroke="#7090c0"/><path d="M0.5 1h14l-5 6v6h-3V7z" fill="url(#fg178)" stroke="#606060" stroke-width=".6"/><path d="M13 5v12" stroke="#1a3048" stroke-width="1.4"/><path d="M10.5 14l2.5 4 2.5-4z" fill="#1a3048"/><path d="M12 3l2 1-2 1" stroke="#3a5a70" stroke-width=".8" fill="none"/></svg>
<div class="t" style="left:196px;top:425px;">По строке СН</div>
<svg class="a" style="left:556px;top:155px" width="17" height="17"><defs><radialGradient id="ga556155" cx=".4" cy=".3" r=".75"><stop offset="0" stop-color="#c6e6b4"/><stop offset=".6" stop-color="#7cc068"/><stop offset="1" stop-color="#4a9a3a"/></radialGradient></defs><circle cx="8" cy="8" r="7.4" fill="url(#ga556155)" stroke="#6d8a64" stroke-width="1"/><path d="M8 4v8M4 8h8" stroke="#fff" stroke-width="2.6"/></svg>
<svg class="a" style="left:580px;top:156px" width="17" height="16"><path d="M1.5 .5h7l3 3v10h-10z" fill="#fff" stroke="#7f98b8"/><path d="M3 2.5h4M3 4.5h4M3 7.5h5M3 9.5h4M3 11.5h4" stroke="#9fb2c6"/><circle cx="11.5" cy="10.5" r="4.3" fill="#6cb45a" stroke="#5a7a5a" stroke-width=".8"/><path d="M11.5 8v5M9 10.5h5" stroke="#fff" stroke-width="1.8"/></svg>
<svg class="a" style="left:603px;top:156px" width="14" height="14"><path d="M1.5 9.5L9.5 1.5l3 3-8 8h-3z" fill="#a4b49c" stroke="#8e9e88" stroke-width=".7"/><path d="M2 12.5l.8-2.6 1.8 1.8z" fill="#c8d2c0"/><path d="M3 9l7-7" stroke="#c0ccb8" stroke-width="1"/></svg>
<svg class="a" style="left:626px;top:157px" width="13" height="13"><path d="M1.5 1.5l10 10M11.5 1.5l-10 10" stroke="#e8503a" stroke-width="2.4"/></svg>
<svg class="a" style="left:648px;top:155px" width="16" height="16"><rect x=".5" y=".5" width="15" height="15" rx="1" fill="#b4c4d2" stroke="#a4b4c4"/><rect x="3" y="1" width="10" height="6" fill="#d8e2ea"/><rect x="3" y="3" width="10" height="1" fill="#a4b4c4"/><rect x="4" y="10" width="11" height="6" fill="#d0dae4"/><text x="6" y="15.5" font-family="Liberation Sans" font-size="6" font-weight="bold" fill="#9aaabb">OK</text></svg>
<svg class="a" style="left:672px;top:157px" width="14" height="13"><path d="M7 .5L13.5 7H10v5.5H4V7H.5z" fill="#b7c4cc" stroke="#9aaab4" stroke-width=".8"/></svg>
<svg class="a" style="left:695px;top:156px" width="14" height="14"><defs><linearGradient id="gd695" x1="0" x2="0" y1="0" y2="1"><stop offset="0" stop-color="#a9d4f4"/><stop offset="1" stop-color="#3e8ed6"/></linearGradient></defs><path d="M4 .5h6V6h3.5L7 13 .5 6H4z" fill="url(#gd695)" stroke="#3a7ab8" stroke-width=".8"/></svg>
<svg class="a" style="left:717px;top:155px" width="16" height="17"><text x="0" y="8" font-family="Liberation Serif" font-size="10.5" fill="#8ea4b8">А</text><text x="0" y="16" font-family="Liberation Serif" font-size="10.5" fill="#a08888">Я</text><path d="M12 2v12" stroke="#8ea4b8" stroke-width="1.2"/><path d="M9.5 11l2.5 4 2.5-4z" fill="#8ea4b8"/></svg>
<svg class="a" style="left:740px;top:155px" width="16" height="17"><text x="0" y="8" font-family="Liberation Serif" font-size="10.5" fill="#a08888">Я</text><text x="0" y="16" font-family="Liberation Serif" font-size="10.5" fill="#8ea4b8">А</text><path d="M12 2v12" stroke="#8ea4b8" stroke-width="1.2"/><path d="M9.5 11l2.5 4 2.5-4z" fill="#8ea4b8"/></svg>
<div class="a" style="left:762px;top:154px;width:1px;height:18px;background:linear-gradient(#fdf9ee,#c2b898 30%,#c2b898 70%,#fdf9ee);box-shadow:1px 0 0 rgba(255,255,255,.6)"></div>
<div class="t" style="left:769px;top:157px;">Подбор</div>
<div class="a" style="left:814px;top:154px;width:1px;height:18px;background:linear-gradient(#fdf9ee,#c2b898 30%,#c2b898 70%,#fdf9ee);box-shadow:1px 0 0 rgba(255,255,255,.6)"></div>
<svg class="a" style="left:822px;top:155px" width="12" height="16"><path d="M.5 .5h7l3 3v11H.5z" fill="#fff" stroke="#8aa0b8"/><text x="2.5" y="8" font-family="Liberation Sans" font-size="6" fill="#30a030">д</text><text x="4.5" y="13.5" font-family="Liberation Sans" font-size="6" fill="#e02020">к</text></svg>
<svg class="a" style="left:838px;top:162px" width="6" height="4"><path d="M0 0H5L2.5 3Z" fill="#2a2010"/></svg>
<svg class="a" style="left:556px;top:423px" width="17" height="17"><defs><radialGradient id="ga556423" cx=".4" cy=".3" r=".75"><stop offset="0" stop-color="#c6e6b4"/><stop offset=".6" stop-color="#7cc068"/><stop offset="1" stop-color="#4a9a3a"/></radialGradient></defs><circle cx="8" cy="8" r="7.4" fill="url(#ga556423)" stroke="#6d8a64" stroke-width="1"/><path d="M8 4v8M4 8h8" stroke="#fff" stroke-width="2.6"/></svg>
<svg class="a" style="left:580px;top:424px" width="17" height="16"><path d="M1.5 .5h7l3 3v10h-10z" fill="#fff" stroke="#7f98b8"/><path d="M3 2.5h4M3 4.5h4M3 7.5h5M3 9.5h4M3 11.5h4" stroke="#9fb2c6"/><circle cx="11.5" cy="10.5" r="4.3" fill="#6cb45a" stroke="#5a7a5a" stroke-width=".8"/><path d="M11.5 8v5M9 10.5h5" stroke="#fff" stroke-width="1.8"/></svg>
<svg class="a" style="left:603px;top:424px" width="14" height="14"><path d="M1.5 9.5L9.5 1.5l3 3-8 8h-3z" fill="#a4b49c" stroke="#8e9e88" stroke-width=".7"/><path d="M2 12.5l.8-2.6 1.8 1.8z" fill="#c8d2c0"/><path d="M3 9l7-7" stroke="#c0ccb8" stroke-width="1"/></svg>
<svg class="a" style="left:626px;top:425px" width="13" height="13"><path d="M1.5 1.5l10 10M11.5 1.5l-10 10" stroke="#e8503a" stroke-width="2.4"/></svg>
<svg class="a" style="left:648px;top:422px" width="16" height="16"><rect x=".5" y=".5" width="15" height="15" rx="1" fill="#b4c4d2" stroke="#a4b4c4"/><rect x="3" y="1" width="10" height="6" fill="#d8e2ea"/><rect x="3" y="3" width="10" height="1" fill="#a4b4c4"/><rect x="4" y="10" width="11" height="6" fill="#d0dae4"/><text x="6" y="15.5" font-family="Liberation Sans" font-size="6" font-weight="bold" fill="#9aaabb">OK</text></svg>
<div class="a" style="left:669px;top:422px;width:1px;height:19px;background:linear-gradient(#fdf9ee,#c2b898 30%,#c2b898 70%,#fdf9ee);box-shadow:1px 0 0 rgba(255,255,255,.6)"></div>
<svg class="a" style="left:678px;top:423px" width="13" height="15"><path d="M1 .5h4l1 1h5v8H1z" fill="#b4c6dc" stroke="#9fb2c8" stroke-width=".8"/><path d="M2 3h8M2 5h8M3 7h7" stroke="#e4ecf4" stroke-width="1"/><rect x="0" y="4" width="12" height="10" fill="#c4bcaa" opacity=".85"/><rect x="0" y="9" width="12" height="5" fill="#c6bfae"/><path d="M3 8h6" stroke="#a8b8e0"/></svg>
<svg class="a" style="left:694px;top:430px" width="6" height="4"><path d="M0 0H5L2.5 3Z" fill="#9a8040"/></svg>
<div class="a" style="left:704px;top:422px;width:1px;height:19px;background:linear-gradient(#fdf9ee,#c2b898 30%,#c2b898 70%,#fdf9ee);box-shadow:1px 0 0 rgba(255,255,255,.6)"></div>
<div class="a" style="left:708px;top:420px;width:95px;height:22px;border:1px solid #b1a783;background:#ede8d3;border-radius:2px"></div>
<svg class="a" style="left:711px;top:422px" width="17" height="19"><defs><linearGradient id="fg711" x1="0" x2="1"><stop offset="0" stop-color="#f0f0f0"/><stop offset=".5" stop-color="#8a8a8a"/><stop offset="1" stop-color="#e8e8e8"/></linearGradient></defs><rect x="1.5" y="3.5" width="9" height="12" fill="#eef2f8" stroke="#3a5a88"/><path d="M3 8h1M3 10h1M3 12h1" stroke="#7090c0"/><path d="M0.5 1h14l-5 6v6h-3V7z" fill="url(#fg711)" stroke="#606060" stroke-width=".6"/><path d="M13 5v12" stroke="#1a3048" stroke-width="1.4"/><path d="M10.5 14l2.5 4 2.5-4z" fill="#1a3048"/><path d="M12 3l2 1-2 1" stroke="#3a5a70" stroke-width=".8" fill="none"/></svg>
<div class="t" style="left:729px;top:425px;">По строке СО</div>
<div class="a" style="left:21px;top:215px;width:1052px;height:44px;border:4px solid #f00;box-shadow:3px 3px 2px rgba(0,0,0,.7), inset 3px 3px 2px rgba(0,0,0,.6)"></div>
<div class="t" style="left:12px;top:602px;">Комментарий:</div>
<div class="a" style="left:100px;top:599px;width:991px;height:19px;background:#fff;border:1px solid #b1a783;border-radius:3px"></div>
<div class="t" style="left:103px;top:602px;">Документ создан автоматически сервисной обработкой для корректировки сумм СО и СН на исчисленные ОППВ</div><!--/BODY-->


<!-- status bar -->
<div class="a" style="left:4px;top:626px;width:1095px;height:1px;background:#b6ad8b"></div>
<div class="a" style="left:4px;top:627px;width:1095px;height:24px;background:#f4f0de"></div>
<div class="t" style="left:12px;top:632px;color:#14148c">Романов</div>
<div class="t" style="transform:none;left:955px;top:632px;font-weight:bold;font-size:12px;color:#2e2410">OK</div>
<div class="sep" style="left:980px;top:629px;height:19px"></div>
<div class="t" style="left:987px;top:632px">Записать</div>
<div class="sep" style="left:1042px;top:629px;height:19px"></div>
<div class="t" style="left:1049px;top:632px">Закрыть</div>
</body></html>
